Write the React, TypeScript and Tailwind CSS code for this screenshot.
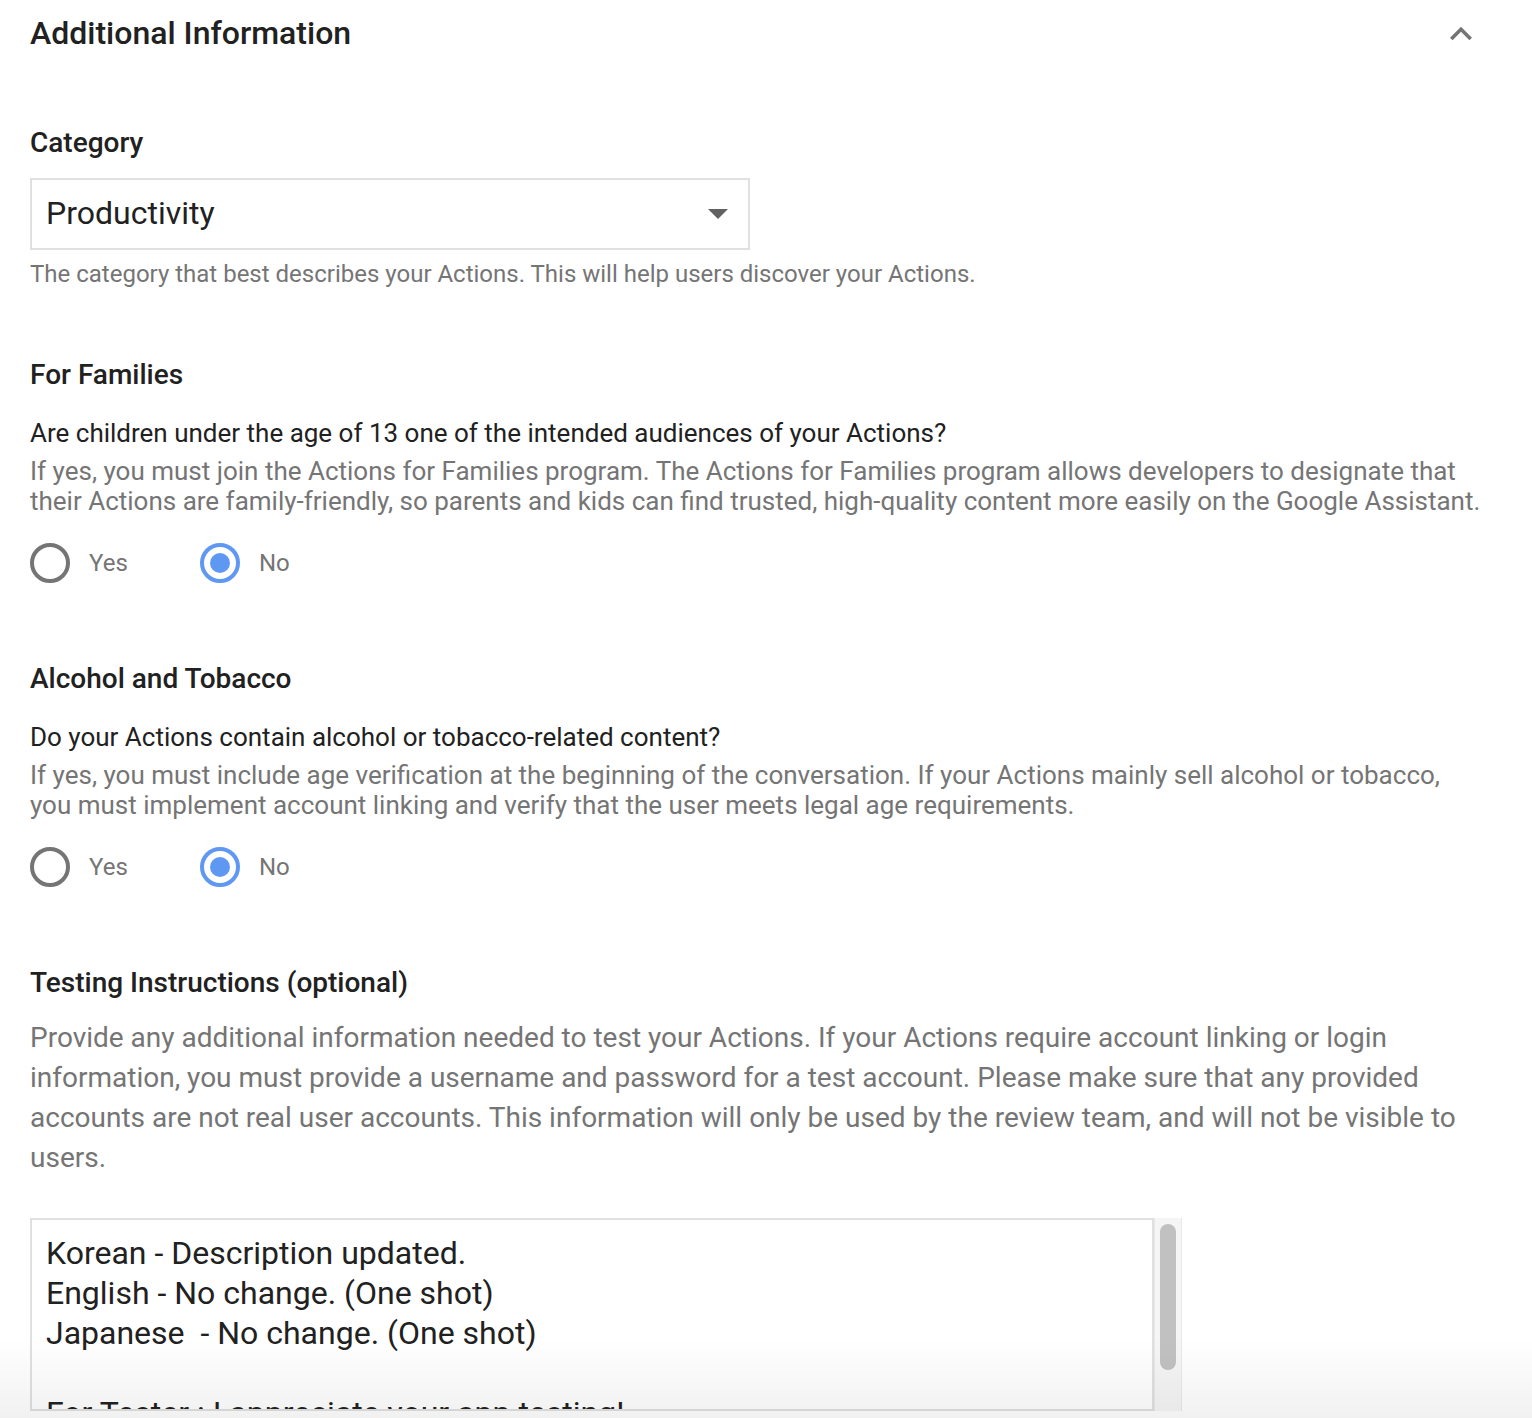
import React from "react";

function Radio({ checked, label }: { checked: boolean; label: string }) {
  return (
    <div className="flex items-center">
      {checked ? (
        <div className="w-10 h-10 rounded-full border-[4px] border-[#5f98f2] flex items-center justify-center">
          <div className="w-[20px] h-[20px] rounded-full bg-[#5f98f2]" />
        </div>
      ) : (
        <div className="w-10 h-10 rounded-full border-[4px] border-[#757575]" />
      )}
      <span className="ml-[19px] text-[24px] leading-[30px] text-[#757575]">{label}</span>
    </div>
  );
}

function RadioGroup() {
  return (
    <div className="flex items-center mt-[27px]">
      <div className="w-[170px]">
        <Radio checked={false} label="Yes" />
      </div>
      <Radio checked={true} label="No" />
    </div>
  );
}

export default function App() {
  return (
    <div
      className="relative w-[1532px] h-[1418px] overflow-hidden bg-white text-[#202124]"
      style={{ fontFamily: "Roboto, 'Noto Sans', sans-serif" }}
    >
      <div className="pl-[30px] pr-[50px]">
        <div className="flex items-center justify-between h-[66px]">
          <h1 className="text-[32px] font-medium text-[#212121] leading-[40px]">Additional Information</h1>
          <svg width="44" height="44" viewBox="0 0 24 24" className="mr-[-1px] mt-[2px]">
            <path d="M7.41 15.41L12 10.83l4.59 4.58L18 14l-6-6-6 6z" fill="#757575" />
          </svg>
        </div>

        <div className="mt-[59px] text-[28px] font-medium text-[#212121] leading-[36px]">Category</div>
        <div className="mt-[17px] w-[720px] h-[72px] border-2 border-[#e0e0e0] flex items-center justify-between pl-[14px] pr-[20px]">
          <span className="text-[32px] leading-[40px] text-[#212121] mt-[-2px]">Productivity</span>
          <svg width="20" height="10" viewBox="0 0 20 10">
            <path d="M0 0 L20 0 L10 10 Z" fill="#616161" />
          </svg>
        </div>
        <div className="mt-[9px] text-[24px] text-[#757575] leading-[30px]">
          The category that best describes your Actions. This will help users discover your Actions.
        </div>

        <div className="mt-[68px] text-[28px] font-medium text-[#212121] leading-[36px]">For Families</div>
        <div className="mt-[23px] text-[26px] text-[#212121] leading-[34px]">
          Are children under the age of 13 one of the intended audiences of your Actions?
        </div>
        <div className="text-[26px] text-[#757575] leading-[30px] mt-[6px]">
          If yes, you must join the Actions for Families program. The Actions for Families program allows developers to designate that their Actions are family-friendly, so parents and kids can find trusted, high-quality content more easily on the Google Assistant.
        </div>
        <RadioGroup />

        <div className="mt-[78px] text-[28px] font-medium text-[#212121] leading-[36px]">Alcohol and Tobacco</div>
        <div className="mt-[23px] text-[26px] text-[#212121] leading-[34px]">
          Do your Actions contain alcohol or tobacco-related content?
        </div>
        <div className="text-[26px] text-[#757575] leading-[30px] mt-[6px]">
          If yes, you must include age verification at the beginning of the conversation. If your Actions mainly sell alcohol or tobacco, you must implement account linking and verify that the user meets legal age requirements.
        </div>
        <RadioGroup />

        <div className="mt-[78px] text-[28px] font-medium text-[#212121] leading-[36px]">Testing Instructions (optional)</div>
        <div className="mt-[17px] text-[28px] text-[#757575] leading-[40px]">
          Provide any additional information needed to test your Actions. If your Actions require account linking or login information, you must provide a username and password for a test account. Please make sure that any provided accounts are not real user accounts. This information will only be used by the review team, and will not be visible to users.
        </div>

        <div className="mt-[40px] flex">
          <div className="w-[1124px] h-[193px] border-2 border-[#e0e0e0] overflow-hidden pl-[14px] pt-[13px]">
            <div className="text-[32px] text-[#212121] leading-[40px]">
              <div>Korean - Description updated.</div>
              <div className="whitespace-pre">English - No change. (One shot)</div>
              <div className="whitespace-pre">Japanese  - No change. (One shot)</div>
              <div className="h-[40px]" />
              <div>For Tester : I appreciate your app testing!</div>
            </div>
          </div>
          <div className="w-[28px] h-[193px] bg-[#f5f5f5] border-l border-r border-[#e8e8e8] pt-[6px] flex justify-center">
            <div className="w-[16px] h-[146px] rounded-full bg-[#c1c1c1]" />
          </div>
        </div>
      </div>
      <div className="absolute left-0 right-0 bottom-0 h-[80px] bg-gradient-to-b from-[rgba(0,0,0,0)] to-[rgba(0,0,0,0.055)] pointer-events-none" />
    </div>
  );
}
